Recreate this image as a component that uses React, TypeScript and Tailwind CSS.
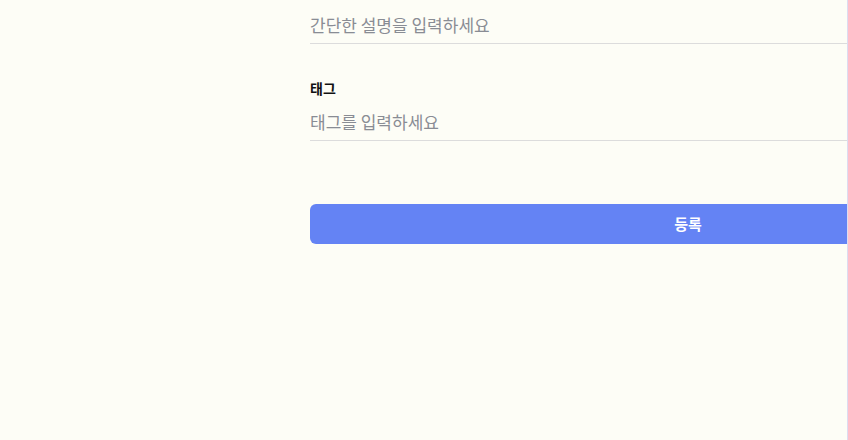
import React from "react";

export default function App() {
  return (
    <div
      className="w-[848px] h-[440px] overflow-hidden bg-[#fdfdf6] border-r border-[#dcdcf0]"
      style={{ fontFamily: '"Noto Sans CJK KR", "Noto Sans", sans-serif' }}
    >
      <div className="ml-[310px] w-[756px] pt-[5px]">
        <input
          className="block w-full h-[39px] bg-transparent border-b border-[#dcdcdc] text-[17px] text-[#222] placeholder:text-[#898c94] outline-none p-0"
          placeholder="간단한 설명을 입력하세요"
        />
        <div className="mt-[34px] h-[20px] text-[14px] font-bold leading-[20px] text-[#111]">
          태그
        </div>
        <input
          className="mt-[4px] block w-full h-[39px] bg-transparent border-b border-[#dcdcdc] text-[17px] text-[#222] placeholder:text-[#898c94] outline-none p-0"
          placeholder="태그를 입력하세요"
        />
        <button className="mt-[63px] w-full h-[40px] rounded-[6px] bg-[#6483f4] text-white text-[15px] font-bold flex items-center justify-center">
          등록
        </button>
      </div>
    </div>
  );
}
